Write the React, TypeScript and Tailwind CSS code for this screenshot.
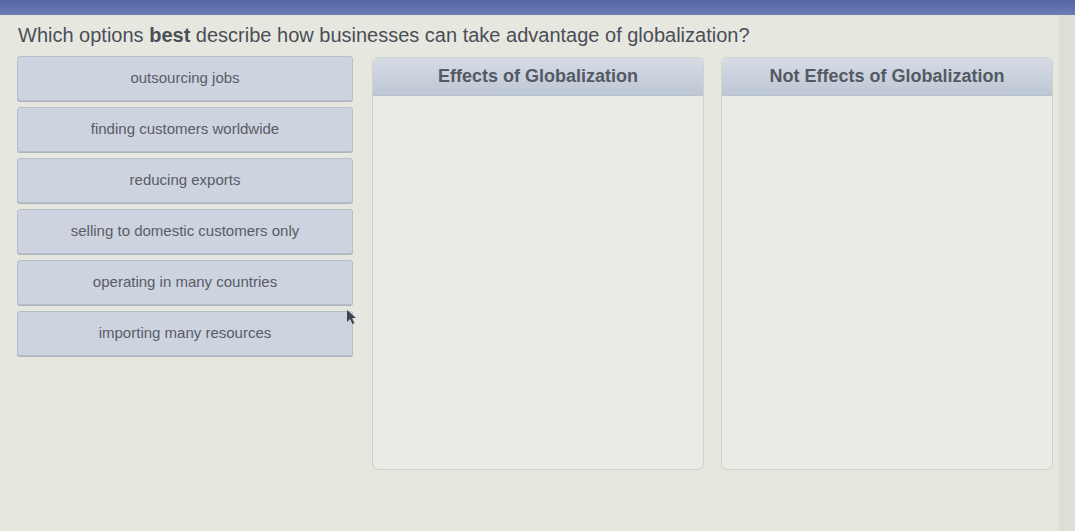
import React from 'react'

const options = [
    'outsourcing jobs',
    'finding customers worldwide',
    'reducing exports',
    'selling to domestic customers only',
    'operating in many countries',
    'importing many resources',
]

function Column({ title }: { title: string }) {
    return (
        <div className="w-[332px] h-[413px] rounded-md border border-[#cfd2ca] bg-[#e9ebe4] overflow-hidden flex flex-col">
            <div className="h-[38px] flex items-center justify-center bg-gradient-to-b from-[#d6dce6] to-[#bec7d5] border-b border-[#b9c1ce] text-[18px] font-bold text-[#545a64]">
                {title}
            </div>
            <div className="flex-1" />
        </div>
    )
}

export default function App() {
    return (
        <div className="relative w-[1075px] h-[531px] bg-[#e6e8e0] font-['Liberation_Sans',Arial,sans-serif] overflow-hidden">
            <div className="h-[15px] bg-gradient-to-b from-[#5565a3] to-[#6f7db4]" />
            <h1 className="mt-[9px] ml-[18px] text-[20px] leading-[22px] text-[#4b4e56]">
                Which options <span className="font-bold">best</span> describe how businesses can take advantage of globalization?
            </h1>
            <div className="flex mt-[10px] ml-[17px] gap-[19px]">
                <div className="w-[336px] flex flex-col gap-[6px]">
                    {options.map((o) => (
                        <div
                            key={o}
                            className="h-[45px] flex items-center justify-center rounded-[3px] border border-[#b9bfca] bg-[#cdd3df] text-[15px] text-[#595d66] shadow-[0_1px_0_#aeb4bf]"
                        >
                            {o}
                        </div>
                    ))}
                </div>
                <div className="flex gap-[17px] mt-[1px]">
                    <Column title="Effects of Globalization" />
                    <Column title="Not Effects of Globalization" />
                </div>
            </div>
            <div className="absolute top-[15px] right-0 w-[16px] bottom-0 bg-[#dcdfd5]" />
            <svg className="absolute left-[346px] top-[309px]" width="12" height="16" viewBox="0 0 12 16">
                <path d="M1 1 L1 13 L4 10 L6.5 15 L8.5 14 L6 9 L10 9 Z" fill="#3f434c" />
            </svg>
        </div>
    )
}
